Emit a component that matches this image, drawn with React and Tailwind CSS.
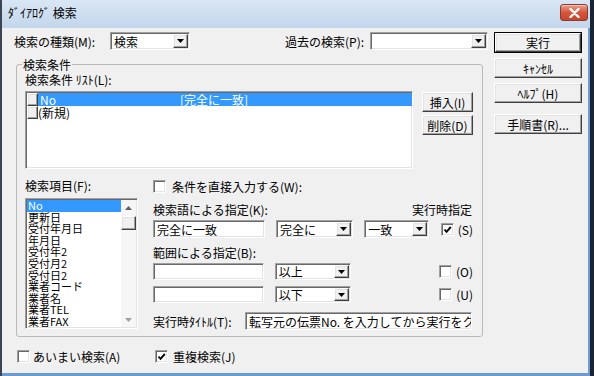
import React from 'react';

const raised =
  'bg-[#f0f0f0] border border-t-white border-l-white border-r-[#404040] border-b-[#404040] shadow-[inset_-1px_-1px_0_#a0a0a0,inset_1px_1px_0_#e3e3e3]';
const sunken =
  'bg-white border border-t-[#a0a0a0] border-l-[#a0a0a0] border-r-white border-b-white shadow-[inset_1px_1px_0_#696969,inset_-1px_-1px_0_#e3e3e3]';

function Btn({ children, className = '', isDefault }) {
  return (
    <button type="button" className={`block p-0 ${isDefault ? 'border border-black' : ''} ${className}`}>
      <span className={`flex h-full w-full items-center justify-center ${raised}`}>{children}</span>
    </button>
  );
}

function Arrow() {
  return (
    <svg width="7" height="4" viewBox="0 0 7 4">
      <path d="M0 0h7L3.5 4z" fill="#000" />
    </svg>
  );
}

function Combo({ value, className = '' }) {
  return (
    <div className={`flex items-stretch ${sunken} ${className}`}>
      <span className="flex flex-1 items-center truncate pl-[3px]">{value}</span>
      <span className={`my-[1px] mr-[1px] flex w-[15px] items-center justify-center ${raised}`}>
        <Arrow />
      </span>
    </div>
  );
}

function TextBox({ value, className = '' }) {
  return (
    <div className={`flex items-center overflow-hidden whitespace-nowrap pl-[3px] ${sunken} ${className}`}>
      {value}
    </div>
  );
}

function Check({ checked }) {
  return (
    <span className={`flex h-[13px] w-[13px] shrink-0 items-center justify-center ${sunken}`}>
      {checked && (
        <svg width="9" height="9" viewBox="0 0 9 9">
          <path d="M1.5 4.5 3.5 6.8 7.8 2" fill="none" stroke="#000" strokeWidth="1.9" />
        </svg>
      )}
    </span>
  );
}

const fields = ['No', '更新日', '受付年月日', '年月日', '受付年2', '受付月2', '受付日2', '業者コード', '業者名', '業者TEL', '業者FAX'];

export default function App() {
  return (
    <div className="flex h-[376px] w-[594px] overflow-hidden bg-[#1b2433] font-['Noto_Sans_CJK_JP',sans-serif] text-[12px] leading-[13px] text-black">
      <div className="flex h-full w-[590px] flex-col border-l-2 border-[#3a4654]">
        <div className="flex h-[28px] items-start justify-between bg-gradient-to-b from-[#d9e6f4] to-[#c3d6ec] pl-[6px] pr-[2px]">
          <span className="mt-[6px] leading-[14px]">ﾀﾞｲｱﾛｸﾞ 検索</span>
          <span className="mt-[4px] flex h-[17px] w-[28px] items-center justify-center rounded-[3px] border border-[#8a3b2c] bg-gradient-to-b from-[#e9a08f] via-[#d2553c] to-[#c7452c] shadow-[inset_0_1px_0_#f4c2b6]">
            <svg width="11" height="10" viewBox="0 0 11 10">
              <path d="M1.5 1 9.5 9M9.5 1 1.5 9" stroke="#fff" strokeWidth="2.4" strokeLinecap="round" />
            </svg>
          </span>
        </div>

        <div className="flex flex-1 border-b-[3px] border-r-[2px] border-[#6b9bcf] bg-[#f0f0f0] pl-[12px] pt-[4px]">
          <div className="flex w-[474px] flex-col">
            <div className="flex h-[18px] items-center">
              <span className="w-[96px]">検索の種類(M):</span>
              <Combo value="検索" className="h-[18px] w-[80px]" />
              <span className="ml-[95px] w-[85px]">過去の検索(P):</span>
              <Combo value="" className="h-[18px] w-[118px]" />
            </div>

            <fieldset className="ml-[2px] mt-[8px] w-[467px] rounded-[3px] border border-[#b9b9b9] px-[8px] pb-[6px]">
              <legend className="-ml-[3px] px-[1px] leading-[13px]">検索条件</legend>
              <div className="mt-[2px] h-[13px]">検索条件 ﾘｽﾄ(L):</div>

              <div className="mt-[5px] flex items-start">
                <div className={`h-[78px] w-[388px] overflow-hidden ${sunken}`}>
                  <div className="ml-[1px] mt-[1px] flex h-[13px]">
                    <span className={`w-[11px] ${raised}`} />
                    <span className="flex flex-1 items-center bg-[#3399ff] pl-[2px] text-white">
                      <span className="w-[140px]">No</span>
                      <span>[完全に一致]</span>
                    </span>
                  </div>
                  <div className="ml-[1px] flex h-[13px]">
                    <span className={`w-[11px] ${raised}`} />
                    <span className="flex items-center">(新規)</span>
                  </div>
                </div>
                <div className="ml-[9px] flex flex-col gap-[3px] pt-[1px]">
                  <Btn className="h-[20px] w-[51px]">挿入(I)</Btn>
                  <Btn className="h-[20px] w-[51px]">削除(D)</Btn>
                </div>
              </div>

              <div className="mt-[10px] flex items-start">
                <div className="flex w-[113px] flex-col">
                  <div className="h-[13px]">検索項目(F):</div>
                  <div className={`mt-[6px] flex h-[131px] ${sunken}`}>
                    <div className="flex-1 overflow-hidden pl-[1px] pt-[1px] text-[11px]">
                      {fields.map((f, i) => (
                        <div
                          key={f}
                          className={`h-[11.6px] whitespace-nowrap pl-[1px] leading-[11.6px] ${i === 0 ? 'bg-[#3399ff] text-white' : ''}`}
                        >
                          {f}
                        </div>
                      ))}
                    </div>
                    <div className="my-[1px] mr-[1px] flex w-[15px] flex-col bg-[#f6f6f6]">
                      <div className="flex h-[15px] items-center justify-center">
                        <svg width="7" height="4" viewBox="0 0 7 4">
                          <path d="M0 4h7L3.5 0z" fill="#606060" />
                        </svg>
                      </div>
                      <div className={`mt-[1px] h-[14px] ${raised}`} />
                      <div className="flex-1" />
                      <div className="flex h-[15px] items-center justify-center">
                        <svg width="7" height="4" viewBox="0 0 7 4">
                          <path d="M0 0h7L3.5 4z" fill="#a0a0a0" />
                        </svg>
                      </div>
                    </div>
                  </div>
                </div>

                <div className="ml-[15px] flex w-[320px] flex-col">
                  <div className="flex h-[14px] items-center">
                    <Check />
                    <span className="ml-[6px]">条件を直接入力する(W):</span>
                  </div>
                  <div className="mt-[10px] flex h-[13px] justify-between pr-[1px]">
                    <span>検索語による指定(K):</span>
                    <span>実行時指定</span>
                  </div>
                  <div className="mt-[4px] flex h-[18px] items-center">
                    <TextBox value="完全に一致" className="h-[18px] w-[113px]" />
                    <Combo value="完全に" className="ml-[11px] h-[18px] w-[78px]" />
                    <Combo value="一致" className="ml-[11px] h-[18px] w-[65px]" />
                    <span className="ml-[12px]">
                      <Check checked />
                    </span>
                    <span className="ml-[4px]">(S)</span>
                  </div>
                  <div className="mt-[8px] h-[13px]">範囲による指定(B):</div>
                  <div className="mt-[4px] flex h-[17px] items-center">
                    <TextBox value="" className="h-[17px] w-[113px]" />
                    <Combo value="以上" className="ml-[11px] h-[17px] w-[78px]" />
                    <span className="ml-[88px]">
                      <Check />
                    </span>
                    <span className="ml-[4px]">(O)</span>
                  </div>
                  <div className="mt-[6px] flex h-[17px] items-center">
                    <TextBox value="" className="h-[17px] w-[113px]" />
                    <Combo value="以下" className="ml-[11px] h-[17px] w-[78px]" />
                    <span className="ml-[88px]">
                      <Check />
                    </span>
                    <span className="ml-[4px]">(U)</span>
                  </div>
                  <div className="mt-[9px] flex h-[18px] items-center">
                    <span className="w-[92px]">実行時ﾀｲﾄﾙ(T):</span>
                    <TextBox
                      value="転写元の伝票No. を入力してから実行をクリックしてください"
                      className="h-[18px] w-[227px]"
                    />
                  </div>
                </div>
              </div>
            </fieldset>

            <div className="mt-[12px] flex h-[14px] items-center">
              <div className="ml-[3px] flex w-[138px] items-center">
                <Check />
                <span className="ml-[3px]">あいまい検索(A)</span>
              </div>
              <div className="flex items-center">
                <Check checked />
                <span className="ml-[5px]">重複検索(J)</span>
              </div>
            </div>
          </div>

          <div className="ml-[6px] flex w-[88px] flex-col">
            <Btn isDefault className="h-[21px] w-[88px]">実行</Btn>
            <Btn className="mt-[5px] h-[20px] w-[88px]">ｷｬﾝｾﾙ</Btn>
            <Btn className="mt-[5px] h-[20px] w-[88px]">ﾍﾙﾌﾟ(H)</Btn>
            <Btn className="mt-[11px] h-[20px] w-[88px]">手順書(R)...</Btn>
          </div>
        </div>
      </div>
    </div>
  );
}
